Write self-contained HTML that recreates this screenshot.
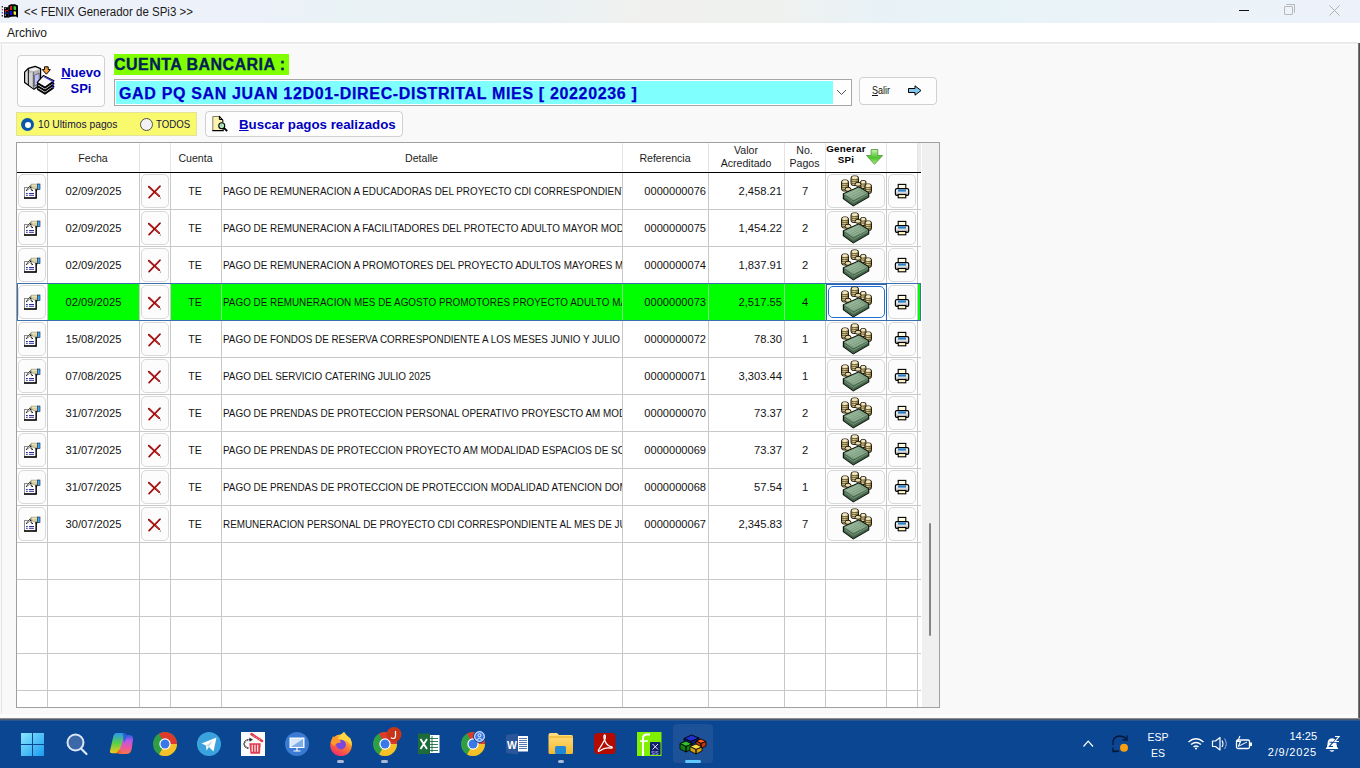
<!DOCTYPE html>
<html><head><meta charset="utf-8">
<title>FENIX Generador de SPi3</title>
<style>
*{box-sizing:border-box;margin:0;padding:0}
html,body{width:1360px;height:768px;overflow:hidden}
body{position:relative;background:#f9f9f9;font-family:"Liberation Sans",sans-serif;color:#000}
.a{position:absolute}
.btn{background:#fdfdfd;border:1px solid #d0d0d0;border-radius:4px}
.hd{font-size:10.6px;color:#1c1c1c;text-align:center;line-height:13px;white-space:nowrap}
.c{height:36px;line-height:36px;color:#141414;white-space:nowrap;overflow:hidden}
.eb{background:#fcfcfc;border:1px solid #d9d9d9;border-radius:5px}
svg.a{overflow:visible}
</style></head><body>

<svg width="0" height="0" style="position:absolute">
<defs>
<linearGradient id="gGreen" x1="0" y1="0" x2="0" y2="1"><stop offset="0" stop-color="#c8f5b0"/><stop offset="0.55" stop-color="#4cc22c"/><stop offset="1" stop-color="#b0ec80"/></linearGradient>
<linearGradient id="gPrint" x1="0" y1="0" x2="0" y2="1"><stop offset="0" stop-color="#ffffff"/><stop offset="0.6" stop-color="#d8d8d8"/><stop offset="1" stop-color="#9a9a9a"/></linearGradient>
<linearGradient id="gBill" x1="0" y1="0" x2="1" y2="1"><stop offset="0" stop-color="#9cbc9e"/><stop offset="1" stop-color="#68886c"/></linearGradient>
<linearGradient id="gCoin" x1="0" y1="0" x2="1" y2="0"><stop offset="0" stop-color="#9c8c58"/><stop offset="0.4" stop-color="#e4d8a6"/><stop offset="1" stop-color="#8a7a44"/></linearGradient>
<symbol id="appicon" viewBox="0 0 18 17">
 <path d="M1.3 3V4.6M1.3 12V13.6" stroke="#000" stroke-width="1.1"/>
 <path d="M1.3 6V7.6" stroke="#a03030" stroke-width="1.1"/>
 <path d="M1.3 9V10.6" stroke="#2030c0" stroke-width="1.1"/>
 <path d="M3 4.2H7.6V14.6H3Z" fill="#000"/>
 <path d="M3.8 5.6H4.8M3.8 12.4H4.8" stroke="#fff" stroke-width="0.8"/>
 <path d="M4 7.6H7.5" stroke="#e01010" stroke-width="1.2"/>
 <path d="M4 10.2H7.5" stroke="#1020c0" stroke-width="1.2"/>
 <path d="M3.8 8.9H4.8M3.8 11.3H4.8" stroke="#fff" stroke-width="0.6"/>
 <path d="M7.3 2.5L10 1.2L14 1.2L17 2.5V14.8L15 13.6L10 13.8L7.3 14.8Z" fill="#000"/>
 <path d="M9 3.2L11.2 2.7V6.8L9 7.2Z" fill="#e02020"/>
 <path d="M12.6 3L15 3.6V7.2L12.6 6.8Z" fill="#30d030"/>
 <path d="M8.8 8L11.3 7.8V11.9L8.8 12.2Z" fill="#1010d0"/>
 <path d="M12.6 8.2L15 8.6V11.9L12.6 11.6Z" fill="#f0f040"/>
</symbol>
<symbol id="nuevo" viewBox="0 0 32 32">
<path d="M0.6 8.2L4.2 4.4L11.2 2.4L16.6 4.6V20.6L10 25.3L0.6 18.5Z" fill="#b4b4b4" stroke="#000" stroke-width="1.2" stroke-linejoin="round"/>
<path d="M1.6 8.6L4.2 5.8V20.2L1.6 18Z" fill="#e0e0e0"/>
<path d="M4.6 5.4L11.2 3.4L15.6 5.2L9 7.6Z" fill="#f0f0f0"/>
<path d="M4.4 9.6L9.2 7.8V24.2L4.4 20.6Z" fill="#d4d4d4"/>
<path d="M4.3 5V21" stroke="#000" stroke-width="1"/>
<path d="M9.3 7.6V24.6" stroke="#505050" stroke-width="0.9"/>
<path d="M10.4 11.4L15.2 9.2V18.6L10.4 22.2Z" fill="#c0c0f8" stroke="#303050" stroke-width="0.6"/>
<path d="M13.2 24.4L19.4 17.6L30 22.8V24.400000000000002L21 30.700000000000003L13.2 26.0Z" fill="#000"/><path d="M13.2 24.4L19.4 17.6L30 22.8L21 29.1Z" fill="#f8f8f8" stroke="#000" stroke-width="1.1" stroke-linejoin="round"/><path d="M19.7 18.5L29 23.400000000000002" stroke="#4040d8" stroke-width="1.4"/><path d="M29.4 23.2V24.6" stroke="#4040d8" stroke-width="1.2"/>
<path d="M13.2 21.4L19.4 14.6L30 19.8V21.400000000000002L21 27.700000000000003L13.2 23.0Z" fill="#000"/><path d="M13.2 21.4L19.4 14.6L30 19.8L21 26.1Z" fill="#f8f8f8" stroke="#000" stroke-width="1.1" stroke-linejoin="round"/><path d="M19.7 15.5L29 20.400000000000002" stroke="#4040d8" stroke-width="1.4"/><path d="M29.4 20.2V21.6" stroke="#4040d8" stroke-width="1.2"/>
<path d="M13.2 18.4L19.4 11.6L30 16.8V18.400000000000002L21 24.700000000000003L13.2 20.0Z" fill="#000"/><path d="M13.2 18.4L19.4 11.6L30 16.8L21 23.1Z" fill="#f8f8f8" stroke="#000" stroke-width="1.1" stroke-linejoin="round"/><path d="M19.7 12.5L29 17.400000000000002" stroke="#4040d8" stroke-width="1.4"/><path d="M29.4 17.2V18.6" stroke="#4040d8" stroke-width="1.2"/>
<path d="M20.5 2.8H24.2V5.6H26.4L22.4 10.2L18.3 5.6H20.5Z" fill="#f8a040" stroke="#000" stroke-width="1" stroke-linejoin="round"/>
</symbol>
<symbol id="buscar" viewBox="0 0 18 18">
 <path d="M0.8 1.5H7.2L10.8 5V15.6H0.8Z" fill="#fbf4b0"/>
 <path d="M0.8 15.6V1.5H7.2" fill="none" stroke="#807c68" stroke-width="1"/>
 <path d="M7.2 1.2L10.8 5.2V7.5M0.3 15.6H11.2V13" fill="none" stroke="#000" stroke-width="1.1"/>
 <path d="M7.4 1.5V4.5H10.5" fill="none" stroke="#000" stroke-width="1"/>
 <circle cx="9.75" cy="10.7" r="3" fill="#b8e8c0" stroke="#000" stroke-width="1.1"/>
 <path d="M8.6 9.2L9.8 10.3" stroke="#40b890" stroke-width="1"/>
 <path d="M12 13L15.2 16.1" stroke="#000" stroke-width="1.9"/>
</symbol>
<symbol id="rarrow" viewBox="0 0 14 11">
 <path d="M0.5 3.5H7V0.8L13 5.5L7 10.2V7.5H0.5Z" fill="#80c8f0" stroke="#000" stroke-width="1"/>
</symbol>
<symbol id="garrow" viewBox="0 0 18 18">
 <path d="M5.1 1.5H11.8V7.5H16.6L8.5 16.3L0.5 7.5H5.1Z" fill="url(#gGreen)" stroke="#5c9a48" stroke-width="0.9"/>
</symbol>
<symbol id="edit" viewBox="0 0 24 24">
 <rect x="4.5" y="7.5" width="11.5" height="10.5" fill="#fff" stroke="#8a8a8a" stroke-width="1"/>
 <path d="M4 18H16.2V9.5" fill="none" stroke="#000" stroke-width="1.3"/>
 <path d="M6 13.5H7.8M9 13.5H14M6 15.3H7.8M9 15.3H14" stroke="#1a1a90" stroke-width="0.9"/>
 <path d="M6.3 10.6L10.2 6.6L12.6 11.4" fill="none" stroke="#fff" stroke-width="1.8"/>
 <path d="M6.3 10.6L10.2 6.6L12.6 11.4" fill="none" stroke="#000" stroke-width="1.6" stroke-dasharray="0.9 0.7"/>
 <path d="M11 4.2H17.6V8.8H14.2Q12.2 8.4 11 6.2Z" fill="#d8d0a0" stroke="#807850" stroke-width="0.5"/>
 <path d="M12 5.3H17" stroke="#f0ecd0" stroke-width="0.8"/>
 <rect x="17.6" y="4" width="2.4" height="5.6" fill="#40a8f0" stroke="#102040" stroke-width="0.6"/>
 <path d="M15.5 9V10.2H17.6V9.6" fill="#000"/>
</symbol>
<symbol id="redx" viewBox="0 0 24 24">
 <path d="M5.9 7.7L16.2 17.1" stroke="#8a0606" stroke-width="1.9" stroke-linecap="round"/>
 <path d="M6.2 7.8L15.6 16.6" stroke="#e83030" stroke-width="0.8" stroke-linecap="round"/>
 <path d="M16.8 7.4L6.1 18.6" stroke="#8a0606" stroke-width="1.6" stroke-linecap="round"/>
 <path d="M16.3 7.9L6.5 18.1" stroke="#d82020" stroke-width="0.6" stroke-linecap="round"/>
 <circle cx="17.4" cy="6.9" r="0.5" fill="#402020"/>
 <circle cx="17.3" cy="19.1" r="0.5" fill="#402020"/>
</symbol>
<symbol id="money" viewBox="0 0 32 32">
<rect x="0.5" y="5" width="7.0" height="11" rx="2.2" fill="url(#gCoin)" stroke="#221c0c" stroke-width="1"/><ellipse cx="4.0" cy="6.6" rx="2.7" ry="1.3" fill="#f2e8c4"/><path d="M1.0 8.6H7.0M1.0 10.6H7.0M1.0 12.6H7.0M1.0 14.6H7.0" stroke="#5a4a20" stroke-width="0.8"/>
<rect x="10" y="1" width="7.5" height="9.5" rx="2.2" fill="url(#gCoin)" stroke="#221c0c" stroke-width="1"/><ellipse cx="13.75" cy="2.6" rx="2.95" ry="1.3" fill="#f2e8c4"/><path d="M10.5 4.6H17.0M10.5 6.6H17.0M10.5 8.6H17.0" stroke="#5a4a20" stroke-width="0.8"/>
<rect x="19.5" y="5.5" width="5.5" height="8.0" rx="1.8333333333333333" fill="url(#gCoin)" stroke="#221c0c" stroke-width="1"/><ellipse cx="22.25" cy="7.1" rx="1.95" ry="1.3" fill="#f2e8c4"/><path d="M20.0 9.1H24.5M20.0 11.1H24.5" stroke="#5a4a20" stroke-width="0.8"/>
<rect x="24" y="9" width="6.5" height="9.5" rx="2.1666666666666665" fill="url(#gCoin)" stroke="#221c0c" stroke-width="1"/><ellipse cx="27.25" cy="10.6" rx="2.45" ry="1.3" fill="#f2e8c4"/><path d="M24.5 12.6H30.0M24.5 14.6H30.0M24.5 16.6H30.0" stroke="#5a4a20" stroke-width="0.8"/>
<ellipse cx="7" cy="14.3" rx="3" ry="2.1" fill="#e6d8a8" stroke="#221c0c" stroke-width="1"/>
<ellipse cx="17" cy="9.3" rx="3" ry="2" fill="#e6d8a8" stroke="#221c0c" stroke-width="1"/>
<path d="M2.4 18.8L17.8 11.9L27.7 17.8V21.8L12.3 30.7L2.4 23.7Z" fill="#4a6850" stroke="#0e160e" stroke-width="1.2"/>
 <path d="M3 19L17.8 12.5L27.2 18L12.3 25.4Z" fill="url(#gBill)"/>
 <path d="M3 23.5L12.3 30M12.3 25.4V30.3M12.3 30L27.3 21.5" fill="none" stroke="#3c6044" stroke-width="0.8"/>
 <path d="M6 19.8L17 14.6M8.2 21.1L19.2 16M10.4 22.4L21.4 17.3M12.6 23.7L23.6 18.6" stroke="#c4e0c4" stroke-width="0.6" opacity="0.6"/>
 <path d="M4 21.5L12.3 27.3L27 19.3" fill="none" stroke="#96c09c" stroke-width="0.7" opacity="0.8"/>
</symbol>
<symbol id="printer" viewBox="0 0 24 24">
 <rect x="8.2" y="6.4" width="7.6" height="5" fill="#fffbe0" stroke="#000" stroke-width="1.1"/>
 <rect x="5.4" y="10.6" width="13.3" height="6.8" rx="1.5" fill="url(#gPrint)" stroke="#000" stroke-width="1.2"/>
 <rect x="8" y="11.4" width="8" height="2.2" fill="#2a80c8"/>
 <rect x="8.2" y="16.5" width="7.6" height="3.3" fill="#fff6c4" stroke="#000" stroke-width="1.1"/>
</symbol>
</defs>
</svg>

<div class="a" style="left:0;top:0;width:1360px;height:23px;background:linear-gradient(to right,#edf1f9 0px,#edf1fa 250px,#e9f2f5 340px,#eaf1f3 540px,#f0f1ef 640px,#eff1ef 780px,#e8f2f6 880px,#e8f3f8 1000px,#eaf3f7 1100px,#edf2fa 1360px)"></div>
<svg class="a" style="left:1px;top:3px" width="18" height="17" viewBox="0 0 18 17"><use href="#appicon"/></svg>
<div class="a" style="left:24px;top:4.5px;font-size:12.5px;line-height:14px;color:#1a1a1a;white-space:nowrap;transform:scaleX(0.921);transform-origin:0 0">&lt;&lt; FENIX Generador de SPi3 &gt;&gt;</div>
<div class="a" style="left:1239px;top:10px;width:10px;height:1px;background:#111"></div>
<div class="a" style="left:1284px;top:6px;width:9px;height:9px;border:1px solid #b8b8b8;border-radius:1px"></div>
<div class="a" style="left:1286px;top:4px;width:9px;height:9px;border-top:1px solid #b8b8b8;border-right:1px solid #b8b8b8;border-radius:1px"></div>
<svg class="a" style="left:1329px;top:5px" width="11" height="11" viewBox="0 0 11 11"><path d="M0.5 0.5L10.5 10.5M10.5 0.5L0.5 10.5" stroke="#b0b0b0" stroke-width="1"/></svg>
<div class="a" style="left:0;top:23px;width:1360px;height:19px;background:#fff"></div>
<div class="a" style="left:7px;top:26px;font-size:12px;line-height:15px;color:#1a1a1a">Archivo</div>
<div class="a" style="left:0;top:42px;width:1358px;height:2px;background:#ebebeb"></div>
<div class="a" style="left:0;top:44px;width:1358px;height:1px;background:#fdfdfd"></div>
<div class="a" style="left:1px;top:44px;width:1px;height:674px;background:#e6e6e6"></div>
<div class="a" style="left:1358px;top:43px;width:2px;height:676px;background:linear-gradient(to right,#8a8a8a,#3c3c3c)"></div>
<div class="a" style="left:0;top:714px;width:1358px;height:4px;background:#fcfcfc"></div>

<!-- Nuevo SPi button -->
<div class="a btn" style="left:17px;top:55px;width:88px;height:52px"></div>
<svg class="a" style="left:24px;top:64px" width="32" height="32" viewBox="0 0 32 32"><use href="#nuevo"/></svg>
<div class="a" style="left:59px;top:65px;width:44px;font-size:13px;line-height:15.6px;font-weight:bold;color:#0000c0;text-align:center"><u>N</u>uevo<br>SPi</div>

<!-- Cuenta bancaria -->
<div class="a" style="left:114px;top:54px;width:175px;height:21px;background:#80ff00"></div>
<div class="a" style="left:114px;top:55px;font-size:16px;letter-spacing:0.45px;line-height:19px;font-weight:bold;color:#00205a;white-space:nowrap;-webkit-text-stroke:0.3px #00205a">CUENTA BANCARIA :</div>

<!-- combo -->
<div class="a" style="left:114px;top:79px;width:738px;height:27px;border:1px solid #a6a6a6;background:#fff"></div>
<div class="a" style="left:116px;top:81px;width:717px;height:23px;background:#80ffff"></div>
<div class="a" style="left:119px;top:83px;font-size:16px;letter-spacing:0.66px;line-height:21px;font-weight:bold;color:#0000c8;white-space:nowrap;-webkit-text-stroke:0.25px #0000c8">GAD PQ SAN JUAN 12D01-DIREC-DISTRITAL MIES [ 20220236 ]</div>
<svg class="a" style="left:836px;top:89px" width="11" height="7" viewBox="0 0 11 7"><path d="M1 1L5.5 5.5L10 1" fill="none" stroke="#555" stroke-width="1"/></svg>

<!-- Salir -->
<div class="a btn" style="left:859px;top:77px;width:78px;height:28px"></div>
<div class="a" style="left:872px;top:84px;font-size:10.5px;line-height:13px;color:#111;white-space:nowrap;transform:scaleX(0.86);transform-origin:0 0"><u>S</u>alir</div>
<svg class="a" style="left:908px;top:85px" width="14" height="11" viewBox="0 0 14 11"><use href="#rarrow"/></svg>

<!-- radio panel -->
<div class="a" style="left:16px;top:112px;width:181px;height:24px;background:#f9f96e;border:1px solid #e2e29a"></div>
<div class="a" style="left:21px;top:118px;width:13px;height:13px;border-radius:50%;background:#0758ad"></div>
<div class="a" style="left:24.5px;top:121.5px;width:6px;height:6px;border-radius:50%;background:#fff"></div>
<div class="a" style="left:38px;top:118px;font-size:11px;line-height:13px;color:#14143c;white-space:nowrap;transform:scaleX(0.935);transform-origin:0 0">10 Ultimos pagos</div>
<div class="a" style="left:139.5px;top:117.5px;width:13px;height:13px;border-radius:50%;border:1px solid #505050;background:#f2f2f2"></div>
<div class="a" style="left:156px;top:118px;font-size:11px;line-height:13px;color:#14143c;white-space:nowrap;transform:scaleX(0.875);transform-origin:0 0">TODOS</div>

<!-- Buscar -->
<div class="a btn" style="left:205px;top:111px;width:198px;height:26px"></div>
<svg class="a" style="left:212px;top:115px" width="18" height="18" viewBox="0 0 18 18"><use href="#buscar"/></svg>
<div class="a" style="left:239px;top:117px;font-size:13.3px;line-height:16px;font-weight:bold;color:#0000c0;white-space:nowrap"><u>B</u>uscar pagos realizados</div>

<div class="a" style="left:16px;top:142px;width:924px;height:566px;border:1px solid #a0a0a0;background:#fff"></div>
<div class="a" style="left:922px;top:143px;width:17px;height:564px;background:#f0f0f0"></div>
<div class="a" style="left:917px;top:143px;width:4px;height:29px;background:#ececec"></div>
<div class="a" style="left:929px;top:523px;width:2px;height:113px;background:#858585;border-radius:1px"></div>
<div class="a" style="left:47px;top:143px;width:1px;height:29px;background:#e4e4e4"></div>
<div class="a" style="left:139px;top:143px;width:1px;height:29px;background:#e4e4e4"></div>
<div class="a" style="left:170px;top:143px;width:1px;height:29px;background:#e4e4e4"></div>
<div class="a" style="left:221px;top:143px;width:1px;height:29px;background:#e4e4e4"></div>
<div class="a" style="left:622px;top:143px;width:1px;height:29px;background:#e4e4e4"></div>
<div class="a" style="left:708px;top:143px;width:1px;height:29px;background:#e4e4e4"></div>
<div class="a" style="left:784px;top:143px;width:1px;height:29px;background:#e4e4e4"></div>
<div class="a" style="left:825px;top:143px;width:1px;height:29px;background:#e4e4e4"></div>
<div class="a" style="left:886px;top:143px;width:1px;height:29px;background:#e4e4e4"></div>
<div class="a" style="left:917px;top:143px;width:1px;height:29px;background:#e4e4e4"></div>
<div class="a hd" style="left:47px;top:151.5px;width:92px;">Fecha</div>
<div class="a hd" style="left:170px;top:151.5px;width:51px;">Cuenta</div>
<div class="a hd" style="left:221px;top:151.5px;width:401px;">Detalle</div>
<div class="a hd" style="left:622px;top:151.5px;width:86px;">Referencia</div>
<div class="a hd" style="left:708px;top:144px;width:76px;line-height:12.5px">Valor<br>Acreditado</div>
<div class="a hd" style="left:784px;top:144px;width:41px;line-height:12.5px">No.<br>Pagos</div>
<div class="a" style="left:825px;top:144px;width:42px;font-size:9.8px;line-height:10.5px;letter-spacing:0.3px;font-weight:bold;text-align:center;color:#000">Generar<br>SPi</div>
<svg class="a" style="left:866px;top:148px" width="18" height="18" viewBox="0 0 18 18"><use href="#garrow"/></svg>
<div class="a" style="left:17px;top:172px;width:904px;height:1px;background:#000"></div>
<div class="a" style="left:47px;top:173px;width:1px;height:534px;background:#c8c8c8"></div>
<div class="a" style="left:139px;top:173px;width:1px;height:534px;background:#c8c8c8"></div>
<div class="a" style="left:170px;top:173px;width:1px;height:534px;background:#c8c8c8"></div>
<div class="a" style="left:221px;top:173px;width:1px;height:534px;background:#c8c8c8"></div>
<div class="a" style="left:622px;top:173px;width:1px;height:534px;background:#c8c8c8"></div>
<div class="a" style="left:708px;top:173px;width:1px;height:534px;background:#c8c8c8"></div>
<div class="a" style="left:784px;top:173px;width:1px;height:534px;background:#c8c8c8"></div>
<div class="a" style="left:825px;top:173px;width:1px;height:534px;background:#c8c8c8"></div>
<div class="a" style="left:886px;top:173px;width:1px;height:534px;background:#c8c8c8"></div>
<div class="a" style="left:917px;top:173px;width:1px;height:534px;background:#c8c8c8"></div>
<div class="a" style="left:17px;top:209px;width:904px;height:1px;background:#c8c8c8"></div>
<div class="a" style="left:17px;top:246px;width:904px;height:1px;background:#c8c8c8"></div>
<div class="a" style="left:17px;top:283px;width:904px;height:1px;background:#c8c8c8"></div>
<div class="a" style="left:17px;top:320px;width:904px;height:1px;background:#c8c8c8"></div>
<div class="a" style="left:17px;top:357px;width:904px;height:1px;background:#c8c8c8"></div>
<div class="a" style="left:17px;top:394px;width:904px;height:1px;background:#c8c8c8"></div>
<div class="a" style="left:17px;top:431px;width:904px;height:1px;background:#c8c8c8"></div>
<div class="a" style="left:17px;top:468px;width:904px;height:1px;background:#c8c8c8"></div>
<div class="a" style="left:17px;top:505px;width:904px;height:1px;background:#c8c8c8"></div>
<div class="a" style="left:17px;top:542px;width:904px;height:1px;background:#c8c8c8"></div>
<div class="a" style="left:17px;top:579px;width:904px;height:1px;background:#c8c8c8"></div>
<div class="a" style="left:17px;top:616px;width:904px;height:1px;background:#c8c8c8"></div>
<div class="a" style="left:17px;top:653px;width:904px;height:1px;background:#c8c8c8"></div>
<div class="a" style="left:17px;top:690px;width:904px;height:1px;background:#c8c8c8"></div>
<div class="a c" style="left:48px;top:173px;width:91px;text-align:center;font-size:11.2px">02/09/2025</div>
<div class="a c" style="left:170px;top:173px;width:50px;text-align:center;font-size:10.6px">TE</div>
<div class="a" style="left:222px;top:173px;width:400px;height:36px;overflow:hidden"><div class="c" style="position:absolute;left:1px;top:0;width:450px;font-size:11px;transform:scaleX(0.898);transform-origin:0 0;overflow:visible">PAGO DE REMUNERACION A EDUCADORAS DEL PROYECTO CDI CORRESPONDIENTE AL MES DE AGOSTO</div></div>
<div class="a c" style="left:623px;top:173px;width:83px;text-align:right;font-size:11.1px">0000000076</div>
<div class="a c" style="left:709px;top:173px;width:73px;text-align:right;font-size:11.2px">2,458.21</div>
<div class="a c" style="left:785px;top:173px;width:40px;text-align:center;font-size:11.2px">7</div>
<div class="a eb" style="left:18px;top:174px;width:28px;height:34px"></div>
<svg class="a" style="left:20px;top:180px" width="24" height="24" viewBox="0 0 24 24"><use href="#edit"/></svg>
<div class="a eb" style="left:141px;top:174px;width:28px;height:34px"></div>
<svg class="a" style="left:143px;top:179px" width="24" height="24" viewBox="0 0 24 24"><use href="#redx"/></svg>
<div class="a eb" style="left:827px;top:174px;width:58px;height:34px"></div>
<svg class="a" style="left:841px;top:175px" width="32" height="32" viewBox="0 0 32 32"><use href="#money"/></svg>
<div class="a eb" style="left:888px;top:174px;width:28px;height:34px"></div>
<svg class="a" style="left:890px;top:178px" width="24" height="24" viewBox="0 0 24 24"><use href="#printer"/></svg>
<div class="a c" style="left:48px;top:210px;width:91px;text-align:center;font-size:11.2px">02/09/2025</div>
<div class="a c" style="left:170px;top:210px;width:50px;text-align:center;font-size:10.6px">TE</div>
<div class="a" style="left:222px;top:210px;width:400px;height:36px;overflow:hidden"><div class="c" style="position:absolute;left:1px;top:0;width:450px;font-size:11px;transform:scaleX(0.898);transform-origin:0 0;overflow:visible">PAGO DE REMUNERACION A FACILITADORES DEL PROTECTO ADULTO MAYOR MODALIDAD</div></div>
<div class="a c" style="left:623px;top:210px;width:83px;text-align:right;font-size:11.1px">0000000075</div>
<div class="a c" style="left:709px;top:210px;width:73px;text-align:right;font-size:11.2px">1,454.22</div>
<div class="a c" style="left:785px;top:210px;width:40px;text-align:center;font-size:11.2px">2</div>
<div class="a eb" style="left:18px;top:211px;width:28px;height:34px"></div>
<svg class="a" style="left:20px;top:217px" width="24" height="24" viewBox="0 0 24 24"><use href="#edit"/></svg>
<div class="a eb" style="left:141px;top:211px;width:28px;height:34px"></div>
<svg class="a" style="left:143px;top:216px" width="24" height="24" viewBox="0 0 24 24"><use href="#redx"/></svg>
<div class="a eb" style="left:827px;top:211px;width:58px;height:34px"></div>
<svg class="a" style="left:841px;top:212px" width="32" height="32" viewBox="0 0 32 32"><use href="#money"/></svg>
<div class="a eb" style="left:888px;top:211px;width:28px;height:34px"></div>
<svg class="a" style="left:890px;top:215px" width="24" height="24" viewBox="0 0 24 24"><use href="#printer"/></svg>
<div class="a c" style="left:48px;top:247px;width:91px;text-align:center;font-size:11.2px">02/09/2025</div>
<div class="a c" style="left:170px;top:247px;width:50px;text-align:center;font-size:10.6px">TE</div>
<div class="a" style="left:222px;top:247px;width:400px;height:36px;overflow:hidden"><div class="c" style="position:absolute;left:1px;top:0;width:450px;font-size:11px;transform:scaleX(0.898);transform-origin:0 0;overflow:visible">PAGO DE REMUNERACION A PROMOTORES DEL PROYECTO ADULTOS MAYORES MODALIDAD</div></div>
<div class="a c" style="left:623px;top:247px;width:83px;text-align:right;font-size:11.1px">0000000074</div>
<div class="a c" style="left:709px;top:247px;width:73px;text-align:right;font-size:11.2px">1,837.91</div>
<div class="a c" style="left:785px;top:247px;width:40px;text-align:center;font-size:11.2px">2</div>
<div class="a eb" style="left:18px;top:248px;width:28px;height:34px"></div>
<svg class="a" style="left:20px;top:254px" width="24" height="24" viewBox="0 0 24 24"><use href="#edit"/></svg>
<div class="a eb" style="left:141px;top:248px;width:28px;height:34px"></div>
<svg class="a" style="left:143px;top:253px" width="24" height="24" viewBox="0 0 24 24"><use href="#redx"/></svg>
<div class="a eb" style="left:827px;top:248px;width:58px;height:34px"></div>
<svg class="a" style="left:841px;top:249px" width="32" height="32" viewBox="0 0 32 32"><use href="#money"/></svg>
<div class="a eb" style="left:888px;top:248px;width:28px;height:34px"></div>
<svg class="a" style="left:890px;top:252px" width="24" height="24" viewBox="0 0 24 24"><use href="#printer"/></svg>
<div class="a" style="left:48px;top:284px;width:91px;height:36px;background:#00ff00"></div>
<div class="a" style="left:171px;top:284px;width:654px;height:36px;background:#00ff00"></div>
<div class="a" style="left:918px;top:284px;width:3px;height:36px;background:#00ff00"></div>
<div class="a" style="left:221px;top:284px;width:1px;height:36px;background:#7fe67f"></div>
<div class="a" style="left:622px;top:284px;width:1px;height:36px;background:#7fe67f"></div>
<div class="a" style="left:708px;top:284px;width:1px;height:36px;background:#7fe67f"></div>
<div class="a" style="left:784px;top:284px;width:1px;height:36px;background:#7fe67f"></div>
<div class="a c" style="left:48px;top:284px;width:91px;text-align:center;font-size:11.2px">02/09/2025</div>
<div class="a c" style="left:170px;top:284px;width:50px;text-align:center;font-size:10.6px">TE</div>
<div class="a" style="left:222px;top:284px;width:400px;height:36px;overflow:hidden"><div class="c" style="position:absolute;left:1px;top:0;width:450px;font-size:11px;transform:scaleX(0.898);transform-origin:0 0;overflow:visible">PAGO DE REMUNERACION MES DE AGOSTO PROMOTORES PROYECTO ADULTO MAYOR</div></div>
<div class="a c" style="left:623px;top:284px;width:83px;text-align:right;font-size:11.1px">0000000073</div>
<div class="a c" style="left:709px;top:284px;width:73px;text-align:right;font-size:11.2px">2,517.55</div>
<div class="a c" style="left:785px;top:284px;width:40px;text-align:center;font-size:11.2px">4</div>
<div class="a eb" style="left:18px;top:285px;width:28px;height:34px"></div>
<svg class="a" style="left:20px;top:291px" width="24" height="24" viewBox="0 0 24 24"><use href="#edit"/></svg>
<div class="a eb" style="left:141px;top:285px;width:28px;height:34px"></div>
<svg class="a" style="left:143px;top:290px" width="24" height="24" viewBox="0 0 24 24"><use href="#redx"/></svg>
<div class="a" style="left:826px;top:284px;width:61px;height:37px;border:1px solid #2a66b8"></div>
<div class="a eb" style="left:828px;top:286px;width:57px;height:32px;border:1.5px solid #1e6fd0;background:#fff"></div>
<svg class="a" style="left:841px;top:286px" width="32" height="32" viewBox="0 0 32 32"><use href="#money"/></svg>
<div class="a eb" style="left:888px;top:285px;width:28px;height:34px"></div>
<svg class="a" style="left:890px;top:289px" width="24" height="24" viewBox="0 0 24 24"><use href="#printer"/></svg>
<div class="a" style="left:17px;top:283px;width:904px;height:38px;border:1px solid #3a70b0"></div>
<div class="a c" style="left:48px;top:321px;width:91px;text-align:center;font-size:11.2px">15/08/2025</div>
<div class="a c" style="left:170px;top:321px;width:50px;text-align:center;font-size:10.6px">TE</div>
<div class="a" style="left:222px;top:321px;width:400px;height:36px;overflow:hidden"><div class="c" style="position:absolute;left:1px;top:0;width:450px;font-size:11px;transform:scaleX(0.898);transform-origin:0 0;overflow:visible">PAGO DE FONDOS DE RESERVA CORRESPONDIENTE A LOS MESES JUNIO Y JULIO</div></div>
<div class="a c" style="left:623px;top:321px;width:83px;text-align:right;font-size:11.1px">0000000072</div>
<div class="a c" style="left:709px;top:321px;width:73px;text-align:right;font-size:11.2px">78.30</div>
<div class="a c" style="left:785px;top:321px;width:40px;text-align:center;font-size:11.2px">1</div>
<div class="a eb" style="left:18px;top:322px;width:28px;height:34px"></div>
<svg class="a" style="left:20px;top:328px" width="24" height="24" viewBox="0 0 24 24"><use href="#edit"/></svg>
<div class="a eb" style="left:141px;top:322px;width:28px;height:34px"></div>
<svg class="a" style="left:143px;top:327px" width="24" height="24" viewBox="0 0 24 24"><use href="#redx"/></svg>
<div class="a eb" style="left:827px;top:322px;width:58px;height:34px"></div>
<svg class="a" style="left:841px;top:323px" width="32" height="32" viewBox="0 0 32 32"><use href="#money"/></svg>
<div class="a eb" style="left:888px;top:322px;width:28px;height:34px"></div>
<svg class="a" style="left:890px;top:326px" width="24" height="24" viewBox="0 0 24 24"><use href="#printer"/></svg>
<div class="a c" style="left:48px;top:358px;width:91px;text-align:center;font-size:11.2px">07/08/2025</div>
<div class="a c" style="left:170px;top:358px;width:50px;text-align:center;font-size:10.6px">TE</div>
<div class="a" style="left:222px;top:358px;width:400px;height:36px;overflow:hidden"><div class="c" style="position:absolute;left:1px;top:0;width:450px;font-size:11px;transform:scaleX(0.898);transform-origin:0 0;overflow:visible">PAGO DEL SERVICIO CATERING JULIO 2025</div></div>
<div class="a c" style="left:623px;top:358px;width:83px;text-align:right;font-size:11.1px">0000000071</div>
<div class="a c" style="left:709px;top:358px;width:73px;text-align:right;font-size:11.2px">3,303.44</div>
<div class="a c" style="left:785px;top:358px;width:40px;text-align:center;font-size:11.2px">1</div>
<div class="a eb" style="left:18px;top:359px;width:28px;height:34px"></div>
<svg class="a" style="left:20px;top:365px" width="24" height="24" viewBox="0 0 24 24"><use href="#edit"/></svg>
<div class="a eb" style="left:141px;top:359px;width:28px;height:34px"></div>
<svg class="a" style="left:143px;top:364px" width="24" height="24" viewBox="0 0 24 24"><use href="#redx"/></svg>
<div class="a eb" style="left:827px;top:359px;width:58px;height:34px"></div>
<svg class="a" style="left:841px;top:360px" width="32" height="32" viewBox="0 0 32 32"><use href="#money"/></svg>
<div class="a eb" style="left:888px;top:359px;width:28px;height:34px"></div>
<svg class="a" style="left:890px;top:363px" width="24" height="24" viewBox="0 0 24 24"><use href="#printer"/></svg>
<div class="a c" style="left:48px;top:395px;width:91px;text-align:center;font-size:11.2px">31/07/2025</div>
<div class="a c" style="left:170px;top:395px;width:50px;text-align:center;font-size:10.6px">TE</div>
<div class="a" style="left:222px;top:395px;width:400px;height:36px;overflow:hidden"><div class="c" style="position:absolute;left:1px;top:0;width:450px;font-size:11px;transform:scaleX(0.898);transform-origin:0 0;overflow:visible">PAGO DE PRENDAS DE PROTECCION PERSONAL OPERATIVO PROYESCTO AM MODALIDAD</div></div>
<div class="a c" style="left:623px;top:395px;width:83px;text-align:right;font-size:11.1px">0000000070</div>
<div class="a c" style="left:709px;top:395px;width:73px;text-align:right;font-size:11.2px">73.37</div>
<div class="a c" style="left:785px;top:395px;width:40px;text-align:center;font-size:11.2px">2</div>
<div class="a eb" style="left:18px;top:396px;width:28px;height:34px"></div>
<svg class="a" style="left:20px;top:402px" width="24" height="24" viewBox="0 0 24 24"><use href="#edit"/></svg>
<div class="a eb" style="left:141px;top:396px;width:28px;height:34px"></div>
<svg class="a" style="left:143px;top:401px" width="24" height="24" viewBox="0 0 24 24"><use href="#redx"/></svg>
<div class="a eb" style="left:827px;top:396px;width:58px;height:34px"></div>
<svg class="a" style="left:841px;top:397px" width="32" height="32" viewBox="0 0 32 32"><use href="#money"/></svg>
<div class="a eb" style="left:888px;top:396px;width:28px;height:34px"></div>
<svg class="a" style="left:890px;top:400px" width="24" height="24" viewBox="0 0 24 24"><use href="#printer"/></svg>
<div class="a c" style="left:48px;top:432px;width:91px;text-align:center;font-size:11.2px">31/07/2025</div>
<div class="a c" style="left:170px;top:432px;width:50px;text-align:center;font-size:10.6px">TE</div>
<div class="a" style="left:222px;top:432px;width:400px;height:36px;overflow:hidden"><div class="c" style="position:absolute;left:1px;top:0;width:450px;font-size:11px;transform:scaleX(0.898);transform-origin:0 0;overflow:visible">PAGO DE PRENDAS DE PROTECCION PROYECTO AM MODALIDAD ESPACIOS DE SOCIALIZACION</div></div>
<div class="a c" style="left:623px;top:432px;width:83px;text-align:right;font-size:11.1px">0000000069</div>
<div class="a c" style="left:709px;top:432px;width:73px;text-align:right;font-size:11.2px">73.37</div>
<div class="a c" style="left:785px;top:432px;width:40px;text-align:center;font-size:11.2px">2</div>
<div class="a eb" style="left:18px;top:433px;width:28px;height:34px"></div>
<svg class="a" style="left:20px;top:439px" width="24" height="24" viewBox="0 0 24 24"><use href="#edit"/></svg>
<div class="a eb" style="left:141px;top:433px;width:28px;height:34px"></div>
<svg class="a" style="left:143px;top:438px" width="24" height="24" viewBox="0 0 24 24"><use href="#redx"/></svg>
<div class="a eb" style="left:827px;top:433px;width:58px;height:34px"></div>
<svg class="a" style="left:841px;top:434px" width="32" height="32" viewBox="0 0 32 32"><use href="#money"/></svg>
<div class="a eb" style="left:888px;top:433px;width:28px;height:34px"></div>
<svg class="a" style="left:890px;top:437px" width="24" height="24" viewBox="0 0 24 24"><use href="#printer"/></svg>
<div class="a c" style="left:48px;top:469px;width:91px;text-align:center;font-size:11.2px">31/07/2025</div>
<div class="a c" style="left:170px;top:469px;width:50px;text-align:center;font-size:10.6px">TE</div>
<div class="a" style="left:222px;top:469px;width:400px;height:36px;overflow:hidden"><div class="c" style="position:absolute;left:1px;top:0;width:450px;font-size:11px;transform:scaleX(0.898);transform-origin:0 0;overflow:visible">PAGO DE PRENDAS DE PROTECCION DE PROTECCION MODALIDAD ATENCION DOMICILIARIA</div></div>
<div class="a c" style="left:623px;top:469px;width:83px;text-align:right;font-size:11.1px">0000000068</div>
<div class="a c" style="left:709px;top:469px;width:73px;text-align:right;font-size:11.2px">57.54</div>
<div class="a c" style="left:785px;top:469px;width:40px;text-align:center;font-size:11.2px">1</div>
<div class="a eb" style="left:18px;top:470px;width:28px;height:34px"></div>
<svg class="a" style="left:20px;top:476px" width="24" height="24" viewBox="0 0 24 24"><use href="#edit"/></svg>
<div class="a eb" style="left:141px;top:470px;width:28px;height:34px"></div>
<svg class="a" style="left:143px;top:475px" width="24" height="24" viewBox="0 0 24 24"><use href="#redx"/></svg>
<div class="a eb" style="left:827px;top:470px;width:58px;height:34px"></div>
<svg class="a" style="left:841px;top:471px" width="32" height="32" viewBox="0 0 32 32"><use href="#money"/></svg>
<div class="a eb" style="left:888px;top:470px;width:28px;height:34px"></div>
<svg class="a" style="left:890px;top:474px" width="24" height="24" viewBox="0 0 24 24"><use href="#printer"/></svg>
<div class="a c" style="left:48px;top:506px;width:91px;text-align:center;font-size:11.2px">30/07/2025</div>
<div class="a c" style="left:170px;top:506px;width:50px;text-align:center;font-size:10.6px">TE</div>
<div class="a" style="left:222px;top:506px;width:400px;height:36px;overflow:hidden"><div class="c" style="position:absolute;left:1px;top:0;width:450px;font-size:11px;transform:scaleX(0.898);transform-origin:0 0;overflow:visible">REMUNERACION PERSONAL DE PROYECTO CDI CORRESPONDIENTE AL MES DE JULIO</div></div>
<div class="a c" style="left:623px;top:506px;width:83px;text-align:right;font-size:11.1px">0000000067</div>
<div class="a c" style="left:709px;top:506px;width:73px;text-align:right;font-size:11.2px">2,345.83</div>
<div class="a c" style="left:785px;top:506px;width:40px;text-align:center;font-size:11.2px">7</div>
<div class="a eb" style="left:18px;top:507px;width:28px;height:34px"></div>
<svg class="a" style="left:20px;top:513px" width="24" height="24" viewBox="0 0 24 24"><use href="#edit"/></svg>
<div class="a eb" style="left:141px;top:507px;width:28px;height:34px"></div>
<svg class="a" style="left:143px;top:512px" width="24" height="24" viewBox="0 0 24 24"><use href="#redx"/></svg>
<div class="a eb" style="left:827px;top:507px;width:58px;height:34px"></div>
<svg class="a" style="left:841px;top:508px" width="32" height="32" viewBox="0 0 32 32"><use href="#money"/></svg>
<div class="a eb" style="left:888px;top:507px;width:28px;height:34px"></div>
<svg class="a" style="left:890px;top:511px" width="24" height="24" viewBox="0 0 24 24"><use href="#printer"/></svg>
<div class="a" style="left:0;top:718px;width:1360px;height:50px;background:#0a4692"></div>
<div class="a" style="left:0;top:718px;width:1360px;height:1px;background:#8c8c8a"></div>
<div class="a" style="left:0;top:719px;width:1360px;height:1px;background:#4a5a72"></div>
<div class="a" style="left:0;top:720px;width:1360px;height:1px;background:#2a5790"></div>
<!-- active app highlight -->
<div class="a" style="left:673px;top:724px;width:40px;height:39px;border-radius:4px;background:#1d5299"></div>
<div class="a" style="left:685px;top:760px;width:16px;height:3px;border-radius:2px;background:#60c8ff"></div>
<div class="a" style="left:337px;top:760px;width:7px;height:3px;border-radius:2px;background:#a9b9d6"></div>
<div class="a" style="left:381px;top:760px;width:7px;height:3px;border-radius:2px;background:#a9b9d6"></div>
<div class="a" style="left:558px;top:760px;width:6px;height:3px;border-radius:2px;background:#a9b9d6"></div>
<svg class="a" style="left:0;top:718px" width="1360" height="50" viewBox="0 718 1360 50">
 <defs>
  <linearGradient id="gWin" gradientUnits="userSpaceOnUse" x1="21" y1="733" x2="44" y2="756"><stop offset="0" stop-color="#8ae6ff"/><stop offset="1" stop-color="#1a9cf0"/></linearGradient>
  <linearGradient id="gCop1" x1="0" y1="0" x2="0" y2="1"><stop offset="0" stop-color="#2898f0"/><stop offset="0.5" stop-color="#58d048"/><stop offset="1" stop-color="#f8c818"/></linearGradient>
  <linearGradient id="gCop2" x1="0" y1="0" x2="0" y2="1"><stop offset="0" stop-color="#2860d8"/><stop offset="0.3" stop-color="#b858e8"/><stop offset="0.7" stop-color="#f05898"/><stop offset="1" stop-color="#f87848"/></linearGradient>
  <linearGradient id="gFf" x1="0.8" y1="0.1" x2="0.3" y2="1"><stop offset="0" stop-color="#ffd040"/><stop offset="0.45" stop-color="#ff7a30"/><stop offset="1" stop-color="#f02a6a"/></linearGradient>
  <linearGradient id="gFold" x1="0" y1="0" x2="0" y2="1"><stop offset="0" stop-color="#ffe080"/><stop offset="1" stop-color="#f4b830"/></linearGradient>
  <g id="chrome">
   <circle r="12" fill="#2f9e44"/>
   <path d="M0 0L-6 -10.39A12 12 0 0 1 12 0Z" fill="#dd3a2c"/>
   <path d="M0 0L12 0A12 12 0 0 1 -6 10.39Z" fill="#f6c026"/>
   <circle r="5.7" fill="#fff"/>
   <circle r="4.5" fill="#3b78e7"/>
  </g>
 </defs>
 <!-- Windows -->
 <rect x="21" y="733" width="11" height="11" fill="url(#gWin)"/>
 <rect x="33" y="733" width="11" height="11" fill="url(#gWin)"/>
 <rect x="21" y="745" width="11" height="11" fill="url(#gWin)"/>
 <rect x="33" y="745" width="11" height="11" fill="url(#gWin)"/>
 <!-- search -->
 <circle cx="75.5" cy="742.5" r="8" fill="#3d68a8" stroke="#dbe6f6" stroke-width="2"/>
 <path d="M81 748.5L86.5 754" stroke="#dbe6f6" stroke-width="2.2" stroke-linecap="round"/>
 <!-- copilot -->
 <path d="M125.5 735H130Q133.2 735.5 133 739L131.8 748.5Q131 754 126 754H120Q117.5 754 118.3 751.5L122.8 737.5Q123.6 735 125.5 735Z" fill="url(#gCop2)"/>
 <path d="M116.5 733H122.5Q125 733 124.4 735.3L119.4 751Q118.7 753.3 116.3 753.3H112Q109.6 753.3 110 750.8L113.3 736.5Q114.2 733 116.5 733Z" fill="url(#gCop1)"/>
 <path d="M122.5 733Q126.5 733 127.5 735.5L124 743Z" fill="#2a5fd8" opacity="0.85"/>
 <path d="M116 753.3H122L119.5 749Z" fill="#f06030" opacity="0.9"/>
 <!-- chrome 1 -->
 <use href="#chrome" x="165" y="744"/>
 <!-- telegram -->
 <circle cx="209" cy="744" r="12" fill="#3aa3de"/>
 <path d="M201.5 743.5L216.5 737.5L213.5 751.5L209 747L206.5 750.5L206 745.5Z" fill="#fff"/>
 <path d="M206 745.5L213 740.5L209 747" fill="#c8daea"/>
 <!-- trash app -->
 <rect x="241" y="732" width="24" height="24" fill="#fbfbfb"/>
 <path d="M249.3 743.2H260.7L259.9 753.8H250.5Z" fill="#e03a4c"/>
 <path d="M252.2 744.8V751.8M255 744.8V751.8M257.7 744.8V751.8" stroke="#fff" stroke-width="1.1"/>
 <path d="M251.5 734.2L262 741" stroke="#e03a4c" stroke-width="2.6" stroke-linecap="round"/>
 <path d="M253.5 735.8L254.5 736.4M256.2 737.5L257.2 738.1M258.8 739.1L259.8 739.7" stroke="#ffd0d8" stroke-width="0.8"/>
 <path d="M248.5 748.3Q244 747 244.2 743.5Q245 739.5 250 739.6" fill="none" stroke="#303030" stroke-width="1.5" stroke-dasharray="1.4 0.5"/>
 <path d="M249.5 737.6L253 739.8L249.6 741.8Z" fill="#303030"/>
 <!-- remote desktop -->
 <circle cx="297" cy="744" r="12" fill="#3a7ad2"/>
 <rect x="290" y="738" width="14" height="9.5" fill="#d8e8fa" stroke="#fff" stroke-width="1"/>
 <path d="M291 747L303 739V747Z" fill="#3a7ad2" opacity="0.55"/>
 <path d="M297 748V750.5M293.5 751H300.5" stroke="#fff" stroke-width="1.2"/>
 <!-- firefox -->
 <circle cx="341" cy="745.3" r="10.8" fill="url(#gFf)"/>
 <path d="M338 739Q340.5 734 344 731.8Q346 735.5 350.5 738.5Q352.3 742 351.8 746Q348 740 342 740Z" fill="#ffd640"/>
 <circle cx="341" cy="744.6" r="4.9" fill="#7a48e0"/>
 <path d="M330.6 742.5L333 736L335 738.8L336.6 736.2L338.4 739.2Q340.6 740.2 341 742.6Q337 742.4 333.5 746Z" fill="#ff9a28"/>
 <!-- chrome 2 + badge -->
 <use href="#chrome" x="385" y="744"/>
 <circle cx="394" cy="734.5" r="7.5" fill="#c8361a"/>
 <path d="M395.5 731V736Q395.5 738.5 393 738.5Q391.5 738.5 391 737.5" fill="none" stroke="#fff" stroke-width="1.2"/>
 <!-- excel -->
 <rect x="427" y="735" width="12.5" height="18" fill="#fff"/>
 <path d="M429 738.5H438M429 741.5H438M429 744.5H438M429 747.5H438M429 750.5H438M432 736V752" stroke="#1d7044" stroke-width="0.9"/>
 <rect x="418" y="733.5" width="12" height="20.5" fill="#1d6b3a"/>
 <path d="M420.5 739L427 749M427 739L420.5 749" stroke="#fff" stroke-width="1.8"/>
 <!-- chrome 3 with profile -->
 <use href="#chrome" x="473" y="744"/>
 <circle cx="479.5" cy="736.5" r="6" fill="#3b78e7" stroke="#0a4692" stroke-width="1"/>
 <circle cx="479.5" cy="736.5" r="4.8" fill="none" stroke="#fff" stroke-width="1"/>
 <circle cx="479.5" cy="735.3" r="1.5" fill="none" stroke="#fff" stroke-width="0.9"/>
 <path d="M476.8 739.6Q479.5 736.8 482.2 739.6" fill="none" stroke="#fff" stroke-width="0.9"/>
 <!-- word -->
 <rect x="517" y="736" width="11" height="15.5" fill="#fff"/>
 <path d="M519 738.5H527M519 740.5H527M519 742.5H527M519 744.5H527M519 746.5H527M519 748.5H527" stroke="#2b579a" stroke-width="0.8"/>
 <path d="M506 735L518 733.5V754.5L506 753Z" fill="#2b579a"/>
 <text x="507" y="748.5" font-family="Liberation Sans" font-weight="bold" font-size="10.5" fill="#fff">W</text>
 <!-- folder -->
 <path d="M548.5 735Q548.5 733 550.5 733H557L559 735H571.5Q573 735 573 736.5V752.5Q573 754 571.5 754H550Q548.5 754 548.5 752.5Z" fill="url(#gFold)"/>
 <path d="M548.5 737H573" stroke="#e8a820" stroke-width="1"/>
 <rect x="555" y="746" width="11" height="8" rx="1.5" fill="#1e88d8"/>
 <!-- acrobat -->
 <rect x="594" y="733" width="21.5" height="21" rx="3.5" fill="#b30b00"/>
 <path d="M598.5 750Q602 745 605 739Q606 735 604.5 735Q603 736 605 741Q607 746 612 747Q613 748.5 610 748Q605 747 599.5 751Q598 752 598.5 750Z" fill="none" stroke="#fff" stroke-width="1.3"/>
 <!-- fenix green -->
 <rect x="637" y="732" width="24.5" height="24" fill="#7ef000"/>
 <path d="M643 756V738Q643 734.5 647 734.5H650" fill="none" stroke="#fff" stroke-width="2"/>
 <path d="M640 741H648" stroke="#fff" stroke-width="1.6"/>
 <rect x="650" y="742" width="10.5" height="13" rx="1" fill="#10206e"/>
 <path d="M652.5 744L658 749.5M658 744L652.5 749.5" stroke="#ffffff" stroke-width="0.9"/>
 <text x="651.3" y="754.5" font-family="Liberation Sans" font-size="4.5" fill="#c0d0ff">SIS</text>
 <!-- cubes -->
 <path d="M684 738.5L691.5 735L699 738L691 741.5Z" fill="#2030d0" stroke="#000" stroke-width="0.9"/>
 <path d="M684 738.5V741.5L691 744.5V741.5ZM691 741.5V744.5L699 741V738Z" fill="#102080" stroke="#000" stroke-width="0.8"/>
 <path d="M696 741L701 739L706 741.5L701 743.5Z" fill="#ff6020" stroke="#000" stroke-width="0.9"/>
 <path d="M696 741V746L701 748.5V743.5ZM701 743.5V748.5L706 746V741.5Z" fill="#c03810" stroke="#000" stroke-width="0.8"/>
 <path d="M680 743.5L686 741L692 744L686 746.5Z" fill="#30c030" stroke="#000" stroke-width="0.9"/>
 <path d="M680 743.5V749L686 752V746.5ZM686 746.5V752L692 749V744Z" fill="#108010" stroke="#000" stroke-width="0.8"/>
 <path d="M690 746.5L696 744L702 747L696 749.5Z" fill="#ffe040" stroke="#000" stroke-width="0.9"/>
 <path d="M690 746.5V751L696 754V749.5ZM696 749.5V754L702 751V747Z" fill="#d0a010" stroke="#000" stroke-width="0.8"/>
 <!-- tray -->
 <path d="M1083.5 746.5L1088.2 741.2L1093 746.5" fill="none" stroke="#fff" stroke-width="1.2"/>
 <path d="M1113 745Q1112 737 1119 736Q1124 736 1126 739" fill="none" stroke="#0a1838" stroke-width="1.4"/>
 <path d="M1127 735.5V740H1122.5" fill="none" stroke="#0a1838" stroke-width="1.4"/>
 <path d="M1113 747.5V751.5H1117" fill="none" stroke="#0a1838" stroke-width="1.4"/>
 <path d="M1113.5 751Q1116 751.5 1119 751" fill="none" stroke="#0a1838" stroke-width="1.4"/>
 <circle cx="1124" cy="747.8" r="4" fill="#f8a010"/>
 <path d="M1188.5 742Q1196 735.5 1203.5 742" fill="none" stroke="#fff" stroke-width="1.4"/>
 <path d="M1191 744.5Q1196 740.5 1201 744.5" fill="none" stroke="#fff" stroke-width="1.4"/>
 <path d="M1193.5 747Q1196 745 1198.5 747" fill="none" stroke="#fff" stroke-width="1.4"/>
 <circle cx="1196" cy="748.5" r="1.1" fill="#fff"/>
 <path d="M1212.5 741H1215.5L1220 737.5V750L1215.5 746.5H1212.5Z" fill="none" stroke="#fff" stroke-width="1.2" stroke-linejoin="round"/>
 <path d="M1222 740.5Q1224 743.7 1222 747" fill="none" stroke="#fff" stroke-width="1.1"/>
 <path d="M1224.5 738.5Q1228 743.7 1224.5 749" fill="none" stroke="#a0b4d8" stroke-width="1"/>
 <rect x="1236.5" y="740" width="13" height="8.5" rx="1.5" fill="none" stroke="#fff" stroke-width="1.3"/>
 <rect x="1250" y="742.5" width="2" height="3.5" fill="#fff"/>
 <path d="M1240 736L1237.5 741.5H1240.5L1238.5 746" fill="none" stroke="#fff" stroke-width="1.1"/>
 <path d="M1238 746.5L1247 742" stroke="#fff" stroke-width="1"/>
 <path d="M1325.5 749Q1327.5 747 1327.5 744Q1327.5 738.5 1332 738.3Q1336.5 738.5 1336.5 744Q1336.5 747 1338.5 749Z" fill="#fff"/>
 <path d="M1329.5 750.2Q1332 753.5 1334.5 750.2Z" fill="#fff"/>
 <path d="M1329.5 742.2H1333L1329.5 746.5H1333" fill="none" stroke="#0a4692" stroke-width="1.1"/>
 <path d="M1335 736.5H1339L1335 741.5H1339" fill="none" stroke="#0a4692" stroke-width="2.6"/>
 <path d="M1335 736.5H1339L1335 741.5H1339" fill="none" stroke="#fff" stroke-width="1.2"/>
 <text x="1158" y="740.6" text-anchor="middle" font-family="Liberation Sans" font-size="10.5" fill="#fff">ESP</text>
 <text x="1158" y="756.8" text-anchor="middle" font-family="Liberation Sans" font-size="10.5" fill="#fff">ES</text>
 <text x="1317" y="739.9" text-anchor="end" font-family="Liberation Sans" font-size="11" fill="#fff">14:25</text>
 <text x="1317" y="755.7" text-anchor="end" font-family="Liberation Sans" font-size="11" letter-spacing="0.8" fill="#fff">2/9/2025</text>
</svg>

</body></html>
